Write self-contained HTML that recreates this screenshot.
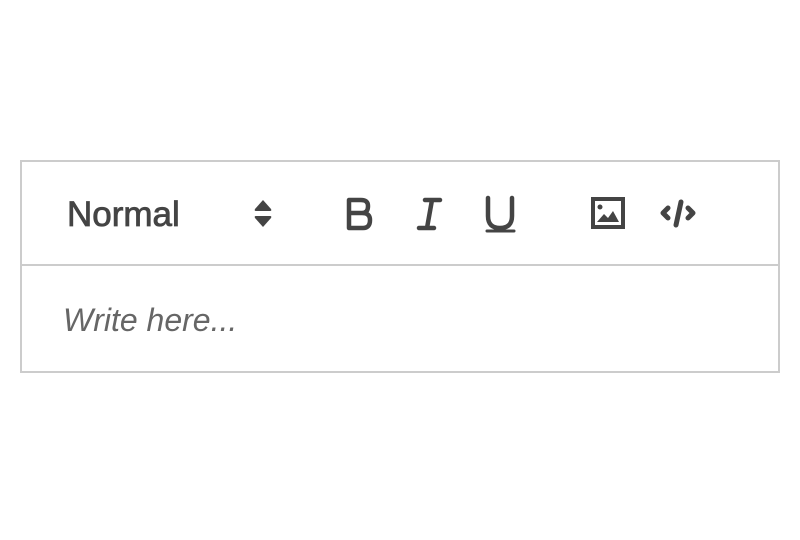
<!DOCTYPE html>
<html><head><style>
html,body{margin:0;padding:0;background:#fff;width:800px;height:540px;overflow:hidden}
.box{position:absolute;left:20px;top:160px;width:756px;height:209px;border:2px solid #ccc}
.div{position:absolute;left:0;top:102px;width:756px;height:2px;background:#ccc}
.n{position:absolute;left:45px;top:30px;font:35px "Liberation Sans",sans-serif;color:#444;line-height:46px;-webkit-text-stroke:0.8px #444}
.p{position:absolute;left:41px;top:136px;font:italic 32px "Liberation Sans",sans-serif;color:#666;line-height:44px}
svg{position:absolute}
</style></head><body>
<div class="box">
<div class="n">Normal</div>
<div class="div"></div>
<div class="p">Write here...</div>
</div>
<svg width="800" height="540" style="left:0;top:0">
<g fill="#444">
<path d="M263 200 L271 209 Q272 211 270 211 L256 211 Q254 211 255 209 Z"/>
<path d="M263 227 L271 218 Q272 216 270 216 L256 216 Q254 216 255 218 Z"/>
</g>
<g fill="none" stroke="#444" stroke-width="4.5" stroke-linecap="round" stroke-linejoin="round">
<path d="M349 200 V228 H363 Q370 228 370 220 Q370 213 362 213 H349 M362 213 Q368 213 368 206 Q368 200 361 200 H349"/>
<path d="M425 200 H440 M419 228 H434 M432 200 L427 228"/>
<path d="M488 198 V216 Q488 228 500 228 Q512 228 512 216 V198"/>
<path d="M487 231 H514" stroke-width="3"/>
<path d="M668 208 L663 213 L668 218 M688 208 L693 213 L688 218 M681 202 L676 225" stroke-width="5"/>
</g>
<rect x="593" y="199" width="30" height="28" fill="none" stroke="#444" stroke-width="4"/>
<circle cx="600" cy="207" r="2.5" fill="#444"/>
<path d="M597 222 L604 214 L608 218 L613 211 L619 222 Z" fill="#444"/>
</svg>
</body></html>
